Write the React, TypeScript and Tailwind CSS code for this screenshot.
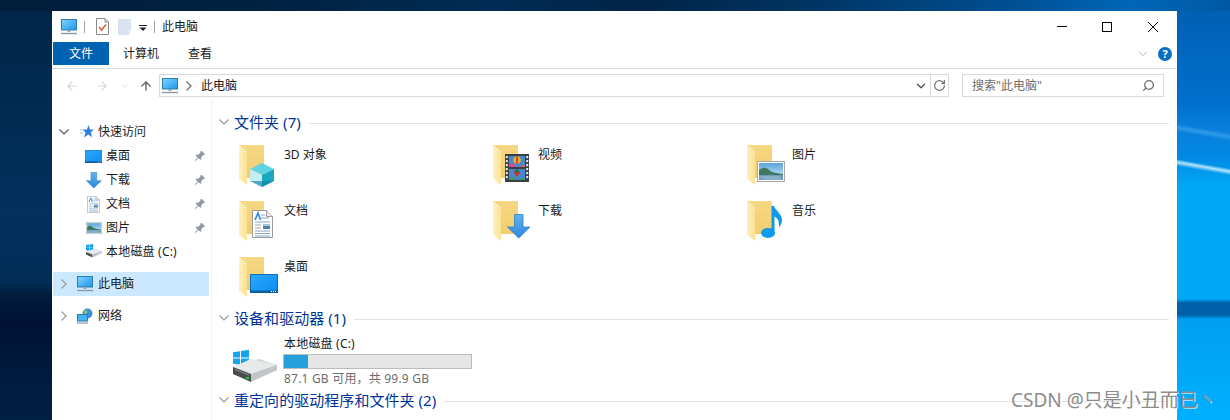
import type { ReactNode } from "react";
import { ArrowLeft, ArrowRight, ArrowUp, ChevronDown, RotateCw, Search } from "lucide-react";

const FONT = "font-['Noto_Sans','Noto_Sans_CJK_SC',sans-serif]";

function ChevDown({ color, className = "" }: { color: string; className?: string }) {
  return (
    <svg width="10" height="6" viewBox="0 0 10 6" className={`shrink-0 ${className}`}>
      <path d="M.5.5L5 5l4.500-4.500" fill="none" stroke={color} strokeWidth="1.200" />
    </svg>
  );
}

function ChevRight({ color, className = "" }: { color: string; className?: string }) {
  return (
    <svg width="6" height="10" viewBox="0 0 6 10" className={`shrink-0 ${className}`}>
      <path d="M.5.5L5 5 .5 9.500" fill="none" stroke={color} strokeWidth="1.400" />
    </svg>
  );
}

function DesktopArt() {
  return (
    <g>
      <defs>
        <linearGradient id="desk" x1="0" y1="0" x2="1" y2="1">
          <stop offset="0" stopColor="#2aa8ff" />
          <stop offset="1" stopColor="#0f8cf0" />
        </linearGradient>
      </defs>
      <rect x="0.5" y="0.5" width="27" height="18" fill="url(#desk)" stroke="#0d6fb5" />
      <rect x="0" y="16.5" width="28" height="2.5" fill="#0b5f9e" />
      <path d="M21 17.5h1M23 17.5h1M25 17.5h1" stroke="#fff" />
    </g>
  );
}

function ArrowArt() {
  return (
    <g>
      <defs>
        <linearGradient id="arr" x1="0" y1="0" x2="0" y2="1">
          <stop offset="0" stopColor="#62b4f2" />
          <stop offset="1" stopColor="#2a86dc" />
        </linearGradient>
      </defs>
      <path d="M7.5 0.5h8.5v12.5h7L11.7 24 .5 13h7z" fill="url(#arr)" stroke="#2f7fc8" strokeWidth="0.8" />
    </g>
  );
}

function DocArt() {
  return (
    <g>
      <path d="M.5.5h14l6 6v21H.5z" fill="#fff" stroke="#9a9a9a" />
      <path d="M14.5.5v6h6" fill="#e8e8e8" stroke="#9a9a9a" />
      <path d="M3 10L6 3l2.5 7" fill="none" stroke="#2a86dc" strokeWidth="1.6" />
      <path d="M9 5h4M9 8h8M3 12h15M3 21h15M3 23.500h15M3 26h15" stroke="#86a6c8" strokeWidth="1" />
      <rect x="11" y="14" width="7" height="5" fill="#4f7f9e" />
      <rect x="11" y="14" width="7" height="2" fill="#9ec9ea" />
      <path d="M3 15h6M3 18h6" stroke="#a0a0a0" />
    </g>
  );
}

function PictureArt() {
  return (
    <g>
      <defs>
        <linearGradient id="sky" x1="0" y1="0" x2="0" y2="1">
          <stop offset="0" stopColor="#5aa6dc" />
          <stop offset="1" stopColor="#d6ecf6" />
        </linearGradient>
      </defs>
      <rect x="0.5" y="0.5" width="27" height="20" fill="#fff" stroke="#a8a8a8" />
      <rect x="2" y="2" width="24" height="17" fill="url(#sky)" />
      <path d="M2 9c4-3 7-3 10 0s8 3 14 4v1H2z" fill="#3e7a62" />
      <rect x="2" y="14" width="24" height="5" fill="#6d9cb8" />
      <path d="M3 16h20M6 18h18" stroke="#b8d4e2" strokeWidth="0.7" />
    </g>
  );
}

function CubeArt() {
  return (
    <g>
      <path d="M12 0l12 6-12 6L0 6z" fill="#5ed4e2" />
      <path d="M0 6l12 6v12L0 18z" fill="#c4eef3" />
      <path d="M12 12l12-6v12l-12 6z" fill="#1aa7c0" />
      <path d="M12 18l12 0-12 6-12-6z" fill="#0f84a2" opacity="0.65" />
    </g>
  );
}

function FilmArt() {
  return (
    <g>
      <rect x="0" y="0" width="24" height="28" fill="#3a3f46" />
      {[2, 6, 10, 14, 18, 22].map((y) => (
        <g key={y}>
          <rect x="0.800" y={y} width="2" height="2.200" fill="#e8e8e8" />
          <rect x="21.200" y={y} width="2" height="2.200" fill="#e8e8e8" />
        </g>
      ))}
      <rect x="4" y="2" width="16" height="11" fill="#4a86d0" />
      <rect x="4" y="15" width="16" height="11" fill="#4a86d0" />
      <path d="M4 11l3-2 3 2v2H4z" fill="#d84a8a" />
      <path d="M15 13l2-2 3 1v1z" fill="#e06a50" />
      <path d="M4 25l4-2 3 2v1H4zM14 26l3-2 3 1v1z" fill="#3e9a5a" />
      <circle cx="12" cy="6" r="3.800" fill="#e8b020" />
      <path d="M12 2.500v7" stroke="#c83020" strokeWidth="1.500" />
      <path d="M9 17c0 3 2 4 3 6 1-2 3-3 3-6z" fill="#d83020" />
      <circle cx="12" cy="17" r="2" fill="#1e7a40" />
    </g>
  );
}

function NoteArt() {
  return (
    <g>
      <ellipse cx="7" cy="27" rx="7" ry="5" fill="#0a9bec" />
      <path d="M10.500 27V0h2.500c1 4 8 8 8 14 0 3-1 5-3 7 .5-6-1.500-9-4.500-10.500V27z" fill="#0a9bec" />
    </g>
  );
}

function Art({ x, y, w, h, children }: { x: number; y: number; w: number; h: number; children: ReactNode }) {
  return (
    <svg x={x} y={y} width={w} height={h} viewBox={`0 0 ${w} ${h}`} overflow="visible">
      {children}
    </svg>
  );
}

function Folder({ children }: { children: ReactNode }) {
  return (
    <svg width="46" height="46" viewBox="0 0 46 46" className="shrink-0" overflow="visible">
      <defs>
        <linearGradient id="fback" x1="0" y1="0" x2="0" y2="1">
          <stop offset="0" stopColor="#f6d883" />
          <stop offset="1" stopColor="#f1cd6f" />
        </linearGradient>
        <linearGradient id="fflap" x1="0" y1="0" x2="1" y2="0">
          <stop offset="0" stopColor="#fff0bd" />
          <stop offset="1" stopColor="#fbe193" />
        </linearGradient>
      </defs>
      <path d="M1 1h25v33H9V8z" fill="url(#fback)" />
      <path d="M1 1l8 8v32l-8-6z" fill="url(#fflap)" />
      {children}
    </svg>
  );
}

function Pc({ className = "" }: { className?: string }) {
  return (
    <svg width="16" height="16" viewBox="0 0 16 16" className={`shrink-0 ${className}`}>
      <defs>
        <linearGradient id="pc" x1="0" y1="0" x2="1" y2="1">
          <stop offset="0" stopColor="#7fd6ff" />
          <stop offset="1" stopColor="#1d93ee" />
        </linearGradient>
      </defs>
      <rect x="0.500" y="0.500" width="15" height="10.500" fill="url(#pc)" stroke="#2b7fa8" />
      <rect x="6.500" y="11" width="3" height="2" fill="#9aa4ad" />
      <path d="M0 14.500h16" stroke="#8d9aa5" strokeWidth="1.400" />
    </svg>
  );
}

function Pin() {
  return (
    <svg width="12" height="12" viewBox="0 0 12 12" className="shrink-0">
      <path d="M7.500.8l3.700 3.700-1 .6-.8-.2-2.300 2.300.2 1.800-.9.900-2-2-3 3-.8-.3 3-3.200-2-2 .9-.9 1.800.2 2.300-2.300-.2-.8z" fill="#8f979e" />
    </svg>
  );
}

function Hdd() {
  return (
    <g>
      <path d="M0 14l26-8 18 6v5L18 28 0 21z" fill="#cfd2d4" />
      <path d="M0 14l18 7 26-9-26-6z" fill="#e8e9ea" />
      <path d="M0 14l18 7v8L0 21z" fill="#4a4d50" />
      <path d="M18 21l26-9v5L18 29z" fill="#c2c5c7" />
      <path d="M2 16.500l14 5.500" stroke="#8a8e90" strokeWidth="1" />
      <rect x="13" y="24" width="3" height="1.800" fill="#34d058" />
    </g>
  );
}

function WinLogo({ s = 1 }: { s?: number }) {
  return (
    <g transform={`scale(${s})`} fill="#12a5ee">
      <path d="M0 2.200l7-1v6.300H0zM8 1l8-1.200v7.700H8zM0 8.500h7v6.300l-7-1zM8 8.500h8V16l-8-1.200z" />
    </g>
  );
}

const NAV_QUICK = [
  {
    label: "桌面",
    icon: (
      <svg width="17" height="13" viewBox="0 0 28 19" preserveAspectRatio="none">
        <DesktopArt />
      </svg>
    ),
  },
  {
    label: "下载",
    icon: (
      <svg width="16" height="16" viewBox="0 0 24 24">
        <ArrowArt />
      </svg>
    ),
  },
  {
    label: "文档",
    icon: (
      <svg width="13" height="17" viewBox="0 0 21 28" className="mx-auto">
        <DocArt />
      </svg>
    ),
  },
  {
    label: "图片",
    icon: (
      <svg width="16" height="12" viewBox="0 0 28 21">
        <PictureArt />
      </svg>
    ),
  },
];

function NavRow({ className = "", children }: { className?: string; children: ReactNode }) {
  return <div className={`flex h-6 items-center ${className}`}>{children}</div>;
}

function Section({ title }: { title: string }) {
  return (
    <div className="flex h-5 items-center pl-[7px]">
      <ChevDown color="#9a9a9a" />
      <span className="ml-[5px] text-[15px] leading-5 tracking-[0.05px] whitespace-nowrap text-[#003399]">{title}</span>
      <span className="mt-[2px] ml-2 h-px flex-1 bg-[#e3e3e3]" />
    </div>
  );
}

const FOLDERS: { label: string; art: ReactNode }[] = [
  { label: "3D 对象", art: <Art x={12} y={19} w={24} h={24}><CubeArt /></Art> },
  { label: "视频", art: <Art x={13} y={10} w={24} h={28}><FilmArt /></Art> },
  { label: "图片", art: <Art x={11} y={17} w={28} h={21}><PictureArt /></Art> },
  { label: "文档", art: <Art x={14} y={10} w={21} h={28}><DocArt /></Art> },
  { label: "下载", art: <Art x={15} y={14} w={24} h={24}><ArrowArt /></Art> },
  { label: "音乐", art: <Art x={15} y={6} w={22} h={32}><NoteArt /></Art> },
  { label: "桌面", art: <Art x={12} y={18} w={28} h={19}><DesktopArt /></Art> },
];

export default function App() {
  return (
    <div className={`relative flex h-[420px] w-[1230px] flex-col overflow-hidden ${FONT} text-xs text-[#1a1a1a]`}>
      <div className="h-[11px] shrink-0 bg-[linear-gradient(90deg,#011e3b_0%,#01213f_20%,#002c55_40%,#012448_52%,#003360_65%,#004d8f_81%,#0066b8_92%,#0058a4_100%)]" />
      <div className="flex min-h-0 flex-1">
        <div className="w-[52px] shrink-0 bg-[linear-gradient(180deg,#01264a_0px,#002b52_100px,#02315e_200px,#012d58_270px,#011c3c_285px,#001233_310px,#001b3d_360px,#011f42_409px)]" />

        <div className="flex w-[1125px] shrink-0 flex-col bg-white">
          {/* title bar */}
          <div className="flex h-[31px] shrink-0 items-center">
            <Pc className="ml-[9px]" />
            <span className="ml-[7px] h-3 w-px bg-[#a0a0a0]" />
            <svg width="13" height="17" viewBox="0 0 13 17" className="ml-[11px]">
              <path d="M.5.5h8.500l3.500 3.500v12.500H.5z" fill="#fff" stroke="#8a8a8a" />
              <path d="M9 .5V4h3.500" fill="none" stroke="#8a8a8a" />
              <path d="M3 9l2.500 3L10 6.500" fill="none" stroke="#e0602a" strokeWidth="1.500" />
            </svg>
            <svg width="13" height="16" viewBox="0 0 13 16" className="ml-[9px]">
              <path d="M0 0h13v11.500h-2V16H0z" fill="#d8e2f1" />
              <path d="M11 12h2l-2 4z" fill="#eef2f8" />
            </svg>
            <svg width="8" height="6" viewBox="0 0 8 6" className="mt-[2px] ml-2">
              <path d="M0 .5h8" stroke="#222" />
              <path d="M.5 2.500h7L4 6z" fill="#222" />
            </svg>
            <span className="ml-[7px] h-3 w-px bg-[#a0a0a0]" />
            <span className="ml-[7px]">此电脑</span>
            <div className="ml-auto flex items-center pr-[19px]">
              <span className="h-px w-[10px] bg-black" />
              <span className="ml-[35px] h-[10px] w-[10px] border border-black" />
              <svg width="10" height="10" viewBox="0 0 10 10" className="ml-[36px]">
                <path d="M0 0l10 10M10 0L0 10" stroke="#000" strokeWidth="1" />
              </svg>
            </div>
          </div>

          {/* ribbon */}
          <div className="flex h-[27px] shrink-0 items-start border-b border-[#dadbdc]">
            <div className="ml-px flex h-[23px] w-[56px] items-center justify-center bg-[#0063b1] text-white">文件</div>
            <div className="flex h-[23px] items-center pl-[14px]">计算机</div>
            <div className="flex h-[23px] items-center pl-[29px]">查看</div>
            <div className="ml-auto flex h-[23px] items-center pr-[5px]">
              <ChevronDown className="h-[14px] w-[14px] text-[#a8a8a8]" strokeWidth={1.5} />
              <span className="ml-[8px] flex h-[14px] w-[14px] items-center justify-center rounded-full bg-[#0a6fc4] text-[11px] leading-none font-bold text-white">?</span>
            </div>
          </div>

          {/* address row */}
          <div className="flex h-[31px] shrink-0 items-center pt-[2px]">
            <ArrowLeft className="ml-[13px] h-[14px] w-[14px] text-[#d4d4d4]" strokeWidth={2} />
            <ArrowRight className="ml-[16px] h-[14px] w-[14px] text-[#d4d4d4]" strokeWidth={2} />
            <ChevronDown className="ml-[11px] h-[10px] w-[10px] text-[#d0d0d0]" strokeWidth={2} />
            <ArrowUp className="ml-[9px] h-[14px] w-[14px] text-[#707070]" strokeWidth={2.6} />
            <div className="ml-[6px] flex h-[23px] w-[790px] items-center border border-[#d9d9d9]">
              <Pc className="ml-[2px]" />
              <ChevRight color="#777" className="ml-[8px]" />
              <span className="ml-[9px]">此电脑</span>
              <ChevronDown className="ml-auto h-[14px] w-[14px] text-[#555]" strokeWidth={2.4} />
              <span className="ml-[2px] h-full w-px bg-[#d9d9d9]" />
              <RotateCw className="mx-[2px] h-[13px] w-[13px] text-[#707070]" strokeWidth={2.2} />
            </div>
            <div className="ml-[13px] flex h-[23px] w-[202px] items-center border border-[#d9d9d9] pr-2 pl-[9px] text-[#6d6d6d]">
              <span>搜索"此电脑"</span>
              <Search className="ml-auto h-[13px] w-[13px] -scale-x-100 text-[#707070]" strokeWidth={2.4} />
            </div>
          </div>

          {/* body */}
          <div className="flex min-h-0 flex-1">
            <nav className="w-[160px] shrink-0 border-r border-[#f0f0f0] pt-5">
              <NavRow className="pl-[7px]">
                <ChevDown color="#555" />
                <svg width="14" height="14" viewBox="0 0 14 14" className="ml-[11px]">
                  <path d="M8.500 0l1.500 4.500h4l-3.200 2.800 1.200 5-3.700-2.800-4.300 3 1.500-5L2.500 4.500h4.500z" fill="#2d7fe0" />
                  <path d="M0 5h2M0 8h3" stroke="#8ab8ea" />
                </svg>
                <span className="ml-[4px]">快速访问</span>
              </NavRow>
              {NAV_QUICK.map((item) => (
                <NavRow key={item.label} className="pl-[33px]">
                  <span className="flex w-[17px] shrink-0 items-center justify-center">{item.icon}</span>
                  <span className="ml-1">{item.label}</span>
                  <span className="ml-auto pr-[5px]">
                    <Pin />
                  </span>
                </NavRow>
              ))}
              <NavRow className="pl-[33px]">
                <span className="flex w-[17px] shrink-0 items-center justify-center">
                  <svg width="16" height="16" viewBox="0 0 16 16" overflow="visible">
                    <WinLogo s={0.45} />
                    <g transform="translate(0 3) scale(0.36)">
                      <Hdd />
                    </g>
                  </svg>
                </span>
                <span className="ml-1 tracking-[0.2px]">本地磁盘 (C:)</span>
              </NavRow>
              <NavRow className="mt-2 ml-px w-[156px] bg-[#cce8ff] pl-2">
                <ChevRight color="#a0a0a0" />
                <Pc className="ml-[10px]" />
                <span className="ml-[5px]">此电脑</span>
              </NavRow>
              <NavRow className="mt-2 ml-px pl-2">
                <ChevRight color="#a0a0a0" />
                <svg width="16" height="16" viewBox="0 0 16 16" className="ml-[10px]">
                  <circle cx="10.500" cy="5.500" r="5" fill="#3e8fd8" />
                  <path d="M7 3c2-1 4 0 3 2s-3 1-3-2z" fill="#7fc87f" />
                  <rect x="0.500" y="6.500" width="10" height="6.500" fill="#46b4f2" stroke="#2b7fa8" />
                  <path d="M0 15h11" stroke="#8d9aa5" strokeWidth="1.200" />
                </svg>
                <span className="ml-[5px]">网络</span>
              </NavRow>
            </nav>

            <main className="min-w-0 flex-1 pt-3 pr-2">
              <Section title="文件夹 (7)" />
              <div className="mt-3 grid grid-cols-[254px_254px_1fr] gap-y-2 pl-[26px]">
                {FOLDERS.map((f) => (
                  <div key={f.label} className="flex h-12 items-start">
                    <Folder>{f.art}</Folder>
                    <span className="mt-[3px] leading-4">{f.label}</span>
                  </div>
                ))}
              </div>
              <div className="mt-1">
                <Section title="设备和驱动器 (1)" />
              </div>
              <div className="mt-[7px] flex h-[52px] pl-[21px]">
                <svg width="44" height="34" viewBox="0 0 44 34" className="mt-[15px] shrink-0" overflow="visible">
                  <WinLogo />
                  <g transform="translate(0 3)">
                    <Hdd />
                  </g>
                </svg>
                <div className="ml-[6px]">
                  <div className="mt-px ml-px h-4 leading-4 tracking-[0.2px]">本地磁盘 (C:)</div>
                  <div className="mt-[2px] h-[15px] w-[189px] border border-[#bcbcbc] bg-[#e6e6e6]">
                    <div className="h-full w-[24px] bg-[#26a0da]" />
                  </div>
                  <div className="mt-[2px] ml-px h-4 leading-4 tracking-[0.2px] text-[#6d6d6d]">87.1 GB 可用，共 99.9 GB</div>
                </div>
              </div>
              <div className="mt-[3px]">
                <Section title="重定向的驱动程序和文件夹 (2)" />
              </div>
            </main>
          </div>
        </div>

        <div className="min-w-0 flex-1 bg-[linear-gradient(190deg,transparent_155px,rgba(210,242,255,0.85)_158px,transparent_162px),linear-gradient(190deg,transparent_120px,rgba(120,200,250,0.35)_124px,transparent_128px),linear-gradient(180deg,#0060b4_0px,#006fcc_90px,#0a80dc_120px,#0088e4_145px,#00a8f5_175px,#00a8f5_288px,#0060a8_292px,#0060a8_304px,#00a0f0_308px,#00b0ff_409px)]" />
      </div>

      <span className="absolute top-[388px] left-[1011px] text-[19px] leading-6 whitespace-nowrap text-[#8c8c8c] [text-shadow:1px_1px_0_rgba(255,255,255,0.6)]">CSDN @只是小丑而已丶</span>
    </div>
  );
}
